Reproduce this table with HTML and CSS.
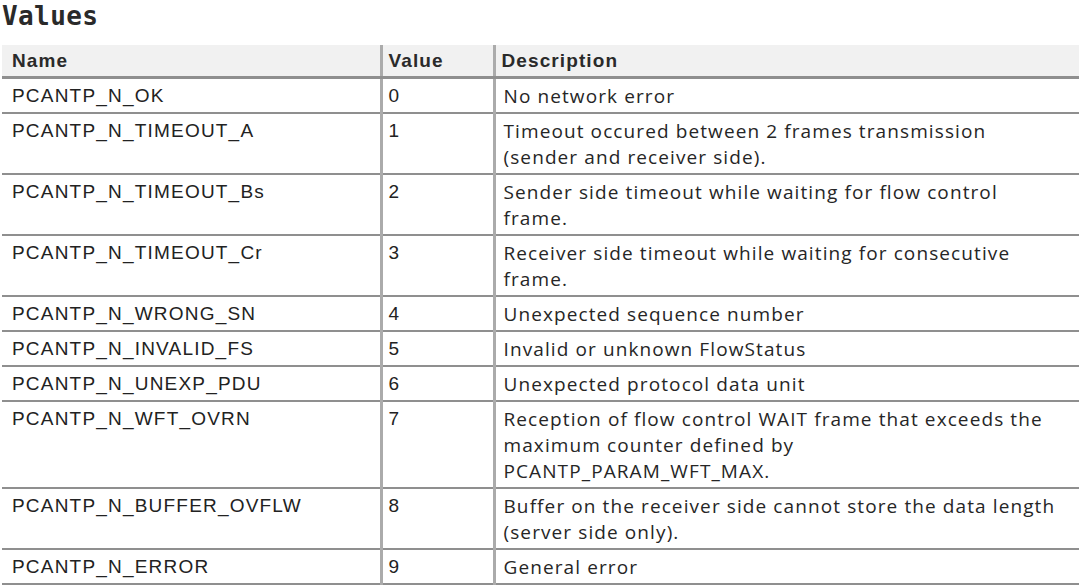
FILE: index.html
```html
<!DOCTYPE html>
<html>
<head>
<meta charset="utf-8">
<link rel="stylesheet" href="styles.css">
</head>
<body>
<h2 class="title">Values</h2>
<table class="values">
  <colgroup>
    <col class="col-name">
    <col class="col-val">
    <col class="col-desc">
  </colgroup>
  <thead>
    <tr><th>Name</th><th>Value</th><th>Description</th></tr>
  </thead>
  <tbody>
    <tr><td>PCANTP_N_OK</td><td>0</td><td class="desc">No network error</td></tr>
    <tr><td>PCANTP_N_TIMEOUT_A</td><td>1</td><td class="desc">Timeout occured between 2 frames transmission<br>(sender and receiver side).</td></tr>
    <tr><td>PCANTP_N_TIMEOUT_Bs</td><td>2</td><td class="desc">Sender side timeout while waiting for flow control<br>frame.</td></tr>
    <tr><td>PCANTP_N_TIMEOUT_Cr</td><td>3</td><td class="desc">Receiver side timeout while waiting for consecutive<br>frame.</td></tr>
    <tr><td>PCANTP_N_WRONG_SN</td><td>4</td><td class="desc">Unexpected sequence number</td></tr>
    <tr><td>PCANTP_N_INVALID_FS</td><td>5</td><td class="desc">Invalid or unknown FlowStatus</td></tr>
    <tr><td>PCANTP_N_UNEXP_PDU</td><td>6</td><td class="desc">Unexpected protocol data unit</td></tr>
    <tr><td>PCANTP_N_WFT_OVRN</td><td>7</td><td class="desc">Reception of flow control WAIT frame that exceeds the<br>maximum counter defined by<br>PCANTP_PARAM_WFT_MAX.</td></tr>
    <tr><td>PCANTP_N_BUFFER_OVFLW</td><td>8</td><td class="desc">Buffer on the receiver side cannot store the data length<br>(server side only).</td></tr>
    <tr><td>PCANTP_N_ERROR</td><td>9</td><td class="desc">General error</td></tr>
  </tbody>
</table>
</body>
</html>
```
FILE: styles.css
```css
html, body {
  margin: 0;
  padding: 0;
  background: #ffffff;
}
body {
  padding: 0 2px 0 2px;
  color: #222;
  font-family: "Liberation Sans", Arial, sans-serif;
}
.title {
  margin: 0;
  padding: 1px 0 0 0;
  height: 45px;
  box-sizing: border-box;
  font-family: "DejaVu Sans Mono", monospace;
  font-weight: bold;
  font-size: 26px;
  letter-spacing: 0.4px;
  line-height: 30px;
  color: #2a2a2a;
}
.values {
  width: 1077px;
  table-layout: fixed;
  border-collapse: collapse;
  font-size: 19px;
  letter-spacing: 1.2px;
  line-height: 26px;
}
.col-name { width: 379px; }
.col-val { width: 113px; }
.values th, .values td {
  text-align: left;
  vertical-align: top;
  padding: 4px 6px 3px 6px;
  border-bottom: 2px solid #8f8f8f;
  border-left: 3px solid #ababab;
  white-space: nowrap;
}
.values th:first-child, .values td:first-child {
  border-left: none;
  padding-left: 10px;
}
.values thead th {
  padding-top: 3px;
  padding-bottom: 2px;
  background: #f1f1f1;
  font-weight: bold;
  letter-spacing: 1.1px;
  color: #2a2a2a;
  border-bottom: 3px solid #8f8f8f;
}
.values td.desc {
  padding-left: 8px;
  font-family: "Open Sans", "Liberation Sans", sans-serif;
  font-size: 19px;
  letter-spacing: 1.1px;
  color: #262626;
}
```
